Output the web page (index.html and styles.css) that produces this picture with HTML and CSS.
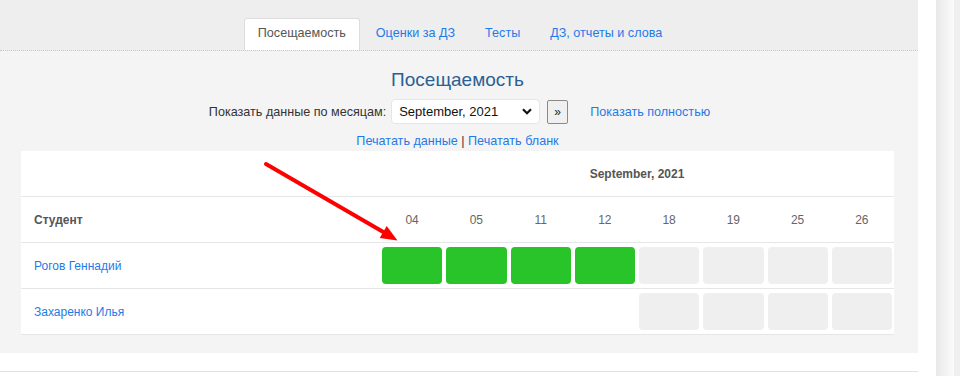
FILE: index.html
```html
<!DOCTYPE html>
<html lang="ru">
<head>
  <meta charset="UTF-8">
  <title>Посещаемость</title>
  <link rel="stylesheet" href="styles.css">
</head>
<body>
  <div class="page">
    <div class="tabs-bar">
      <ul class="tabs">
        <li class="tab active">Посещаемость</li>
        <li class="tab"><a href="#">Оценки за ДЗ</a></li>
        <li class="tab"><a href="#">Тесты</a></li>
        <li class="tab"><a href="#">ДЗ, отчеты и слова</a></li>
      </ul>
    </div>

    <div class="attendance">
      <h2>Посещаемость</h2>
      <div class="controls">
        <label>Показать данные по месяцам:</label>
        <span class="select-wrap">
          <select class="month-select">
            <option>September, 2021</option>
          </select>
          <svg class="chevron" width="10" height="7" viewBox="0 0 10 7"><path d="M1 1.2 L5 5.2 L9 1.2" fill="none" stroke="#111" stroke-width="2.2"/></svg>
        </span>
        <button class="next-btn">»</button>
        <a href="#" class="show-all">Показать полностью</a>
      </div>
      <div class="print-links">
        <a href="#">Печатать данные</a> | <a href="#">Печатать бланк</a>
      </div>

      <div class="grid">
        <div class="row head">
          <div></div>
          <div class="month">September, 2021</div>
        </div>
        <div class="row head">
          <div class="name-col">Студент</div>
          <div class="day">04</div>
          <div class="day">05</div>
          <div class="day">11</div>
          <div class="day">12</div>
          <div class="day">18</div>
          <div class="day">19</div>
          <div class="day">25</div>
          <div class="day">26</div>
        </div>
        <div class="row">
          <div class="name-col"><a href="#">Рогов Геннадий</a></div>
          <div class="cell"><div class="mark present"></div></div>
          <div class="cell"><div class="mark present"></div></div>
          <div class="cell"><div class="mark present"></div></div>
          <div class="cell"><div class="mark present"></div></div>
          <div class="cell"><div class="mark"></div></div>
          <div class="cell"><div class="mark"></div></div>
          <div class="cell"><div class="mark"></div></div>
          <div class="cell"><div class="mark"></div></div>
        </div>
        <div class="row">
          <div class="name-col"><a href="#">Захаренко Илья</a></div>
          <div class="cell"></div>
          <div class="cell"></div>
          <div class="cell"></div>
          <div class="cell"></div>
          <div class="cell"><div class="mark"></div></div>
          <div class="cell"><div class="mark"></div></div>
          <div class="cell"><div class="mark"></div></div>
          <div class="cell"><div class="mark"></div></div>
        </div>
      </div>
    </div>

    <div class="below"></div>

    <!-- стрелка-пометка поверх таблицы -->
    <svg class="arrow" width="918" height="376" viewBox="0 0 918 376">
      <line x1="266" y1="164" x2="385" y2="233" stroke="#ff0000" stroke-width="4" stroke-linecap="round"/>
      <polygon points="397.5,240.5 386.7,225.9 379.7,238.1" fill="#ff0000"/>
    </svg>
  </div>
  <div class="gutter"></div>
  <div class="scroll"></div>
  <div class="edge"></div>
</body>
</html>
```

FILE: styles.css
```css
body {
  margin: 0;
  display: flex;
  height: 376px;
  overflow: hidden;
  font-family: "Liberation Sans", Arial, sans-serif;
  font-size: 12.6px;
  color: #333;
  background: #fff;
}
a { text-decoration: none; color: #1f7ae8; }

.page { width: 918px; flex: none; position: relative; }
.gutter { width: 18px; flex: none; background: #fff; }
.scroll { width: 18px; flex: none; background: linear-gradient(to right, #e9e9e9, #fbfbfb); }
.edge { flex: 1; background: #efefef; }

.tabs-bar {
  background: #eee;
  padding-top: 18px;
  border-bottom: 1px dotted #c8c8c8;
}
.tabs {
  list-style: none;
  margin: 0;
  padding: 0 0 0 2px;
  display: flex;
  justify-content: center;
  gap: 2px;
}
.tab {
  padding: 7px 13px 9px;
  line-height: 15px;
  border: 1px solid transparent;
  border-bottom: 0;
  border-radius: 3px 3px 0 0;
}
.tab.active {
  background: #fff;
  border-color: #ddd;
  color: #555;
}

.attendance {
  background: #f4f4f4;
  padding: 17px 24px 18px 21px;
}
.attendance h2 {
  margin: 0;
  text-align: center;
  font-size: 19px;
  font-weight: normal;
  line-height: 24px;
  color: #2b5f94;
}
.controls {
  margin-top: 7px;
  height: 25px;
  display: flex;
  align-items: center;
  justify-content: center;
  padding-left: 4px;
}
.controls label { color: #333; }
.select-wrap { position: relative; margin-left: 5px; display: flex; }
.month-select {
  appearance: none;
  width: 149px;
  height: 25px;
  padding: 0 0 0 7px;
  border: 1px solid #e6e6e6;
  border-radius: 4px;
  background: #fff;
  font-family: inherit;
  font-size: 13px;
  color: #111;
}
.chevron { position: absolute; right: 8px; top: 9px; pointer-events: none; }
.next-btn {
  margin-left: 7px;
  width: 21px;
  height: 24px;
  padding: 0;
  border: 1px solid #8a8a8a;
  border-radius: 2px;
  background: #f0f0f0;
  font-family: inherit;
  font-size: 12px;
  color: #222;
}
.show-all { margin-left: 22px; }

.print-links {
  margin-top: 9px;
  line-height: 16px;
  text-align: center;
  color: #333;
}

.grid {
  margin-top: 2px;
  background: #fff;
}
.row {
  display: grid;
  grid-template-columns: 359px repeat(8, 1fr);
  align-items: center;
  height: 45px;
  border-bottom: 1px solid #e6e6e6;
  font-size: 12px;
}
.row .month {
  grid-column: span 8;
  text-align: center;
  font-weight: bold;
  color: #555;
}
.name-col { padding-left: 13px; }
.head .name-col { font-weight: bold; color: #555; }
.day { text-align: center; color: #666; }
.cell { padding: 0 2px; }
.mark {
  height: 37px;
  border-radius: 4px;
  background: #efefef;
}
.mark.present { background: #29c32a; }

.below {
  height: 18px;
  border-bottom: 1px solid #e2e2e2;
}

.arrow { position: absolute; left: 0; top: 0; pointer-events: none; }
```
